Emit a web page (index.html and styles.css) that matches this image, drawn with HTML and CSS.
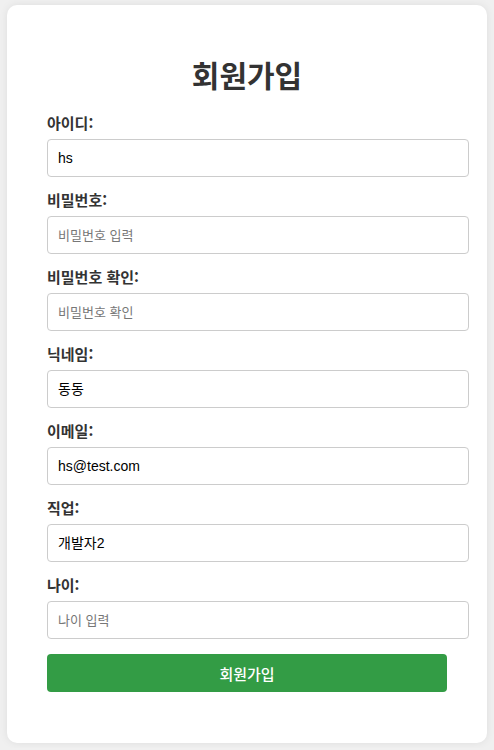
FILE: index.html
```html
<!DOCTYPE html>
<html lang="ko">
<head>
<meta charset="utf-8">
<title>회원가입</title>
<link rel="stylesheet" href="styles.css">
</head>
<body>
<div class="card">
  <h2 class="title">회원가입</h2>
  <form class="form">
    <div class="field">
      <label class="label">아이디:</label>
      <input class="input" type="text" value="hs">
    </div>
    <div class="field">
      <label class="label">비밀번호:</label>
      <input class="input" type="password" placeholder="비밀번호 입력">
    </div>
    <div class="field">
      <label class="label">비밀번호 확인:</label>
      <input class="input" type="password" placeholder="비밀번호 확인">
    </div>
    <div class="field">
      <label class="label">닉네임:</label>
      <input class="input" type="text" value="동동">
    </div>
    <div class="field">
      <label class="label">이메일:</label>
      <input class="input" type="text" value="hs@test.com">
    </div>
    <div class="field">
      <label class="label">직업:</label>
      <input class="input" type="text" value="개발자2">
    </div>
    <div class="field">
      <label class="label">나이:</label>
      <input class="input" type="text" placeholder="나이 입력">
    </div>
    <button class="submit" type="button">회원가입</button>
  </form>
</div>
</body>
</html>
```
FILE: styles.css
```css
html, body {
  margin: 0;
  padding: 0;
  background: #f0f0f0;
}
body {
  padding: 5px 7px;
  font-family: "Noto Sans CJK KR", "Noto Sans", sans-serif;
  color: #333;
}
.card {
  background: #fff;
  border-radius: 10px;
  box-shadow: 0 0 8px rgba(0, 0, 0, 0.08);
  padding: 40px 40px 51px;
  width: 400px;
  margin: 0 auto;
}
.title {
  margin: 9px 0 19px;
  font-size: 30px;
  line-height: 40px;
  font-weight: 700;
  text-align: center;
  color: #333;
}
.form {
  display: flex;
  flex-direction: column;
}
.field {
  display: flex;
  flex-direction: column;
  margin-bottom: 13px;
}
.label {
  font-size: 15px;
  line-height: 20px;
  font-weight: 700;
  color: #333;
  margin-bottom: 6px;
}
.input {
  box-sizing: content-box;
  width: 400px;
  height: 16px;
  padding: 10px;
  margin: 0;
  border: 1px solid #ccc;
  border-radius: 4px;
  font-family: "Liberation Sans", "Noto Sans CJK KR", sans-serif;
  font-size: 14px;
  line-height: 16px;
  color: #000;
  background: #fff;
  outline: none;
}
.input::placeholder {
  color: #777;
  font-family: "Noto Sans CJK KR", sans-serif;
  font-size: 13px;
}
.submit {
  margin-top: 2px;
  width: 400px;
  height: 38px;
  border: none;
  border-radius: 4px;
  background: #339c45;
  color: #fff;
  font-family: "Noto Sans CJK KR", sans-serif;
  font-size: 15px;
  font-weight: 500;
  cursor: pointer;
}
```
